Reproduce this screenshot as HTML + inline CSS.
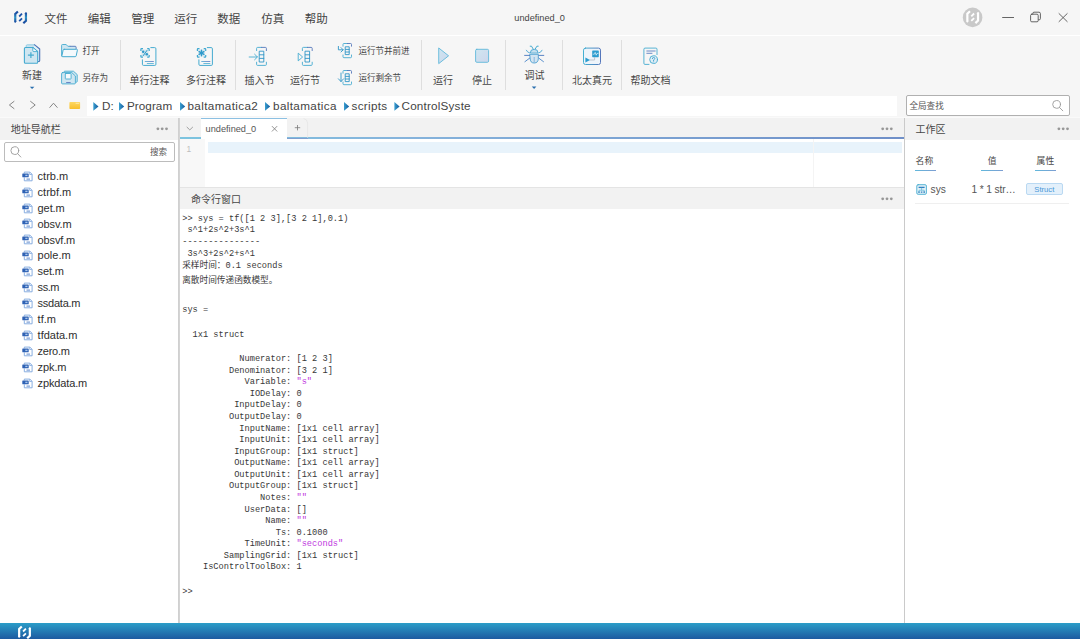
<!DOCTYPE html>
<html lang="zh-CN">
<head>
<meta charset="utf-8">
<title>undefined_0</title>
<style>
*{box-sizing:border-box;margin:0;padding:0}
html,body{width:1080px;height:639px;overflow:hidden;background:#f6f6f6}
body{position:relative;font-family:"Liberation Sans","Noto Sans CJK SC",sans-serif;color:#333;font-size:10px}
.a{position:absolute;white-space:nowrap;line-height:1}
.menu{font-size:11.5px;color:#444;top:14px}
.tl{font-size:10px;color:#464646}
.ts{font-size:8.55px;color:#464646}
.sep{position:absolute;width:1px;background:#dedede;top:40px;height:50px}
.mono{font-family:"Liberation Mono","Noto Sans CJK SC",monospace}
.cl{position:absolute;left:182.2px;white-space:pre;font-family:"Liberation Mono","Noto Sans CJK SC",monospace;font-size:8.67px;line-height:12px;height:12px;color:#383838}
.str{color:#c038e0}
.bc{top:100px;font-size:11.7px;color:#444}
.fi{left:37.6px;font-size:11px;line-height:16px;color:#2e2e2e}
svg{position:absolute;overflow:visible}
</style>
</head>
<body>
<!-- TITLE BAR -->
<div class="a" id="titlebar" style="left:0;top:0;width:1080px;height:35px;background:#f6f6f6"></div>
<div class="a" style="left:0;top:35px;width:1080px;height:1px;background:#fff"></div>
<div class="a menu" style="left:44.4px">文件</div>
<div class="a menu" style="left:87.7px">编辑</div>
<div class="a menu" style="left:131.3px">管理</div>
<div class="a menu" style="left:174.3px">运行</div>
<div class="a menu" style="left:217.3px">数据</div>
<div class="a menu" style="left:261.3px">仿真</div>
<div class="a menu" style="left:304.8px">帮助</div>
<div class="a" style="left:514.3px;top:13.5px;font-size:9.2px;color:#444">undefined_0</div>

<!-- TOOLBAR -->
<div class="a tl" style="left:22px;top:70.7px">新建</div>
<div class="a ts" style="left:82.5px;top:47.1px">打开</div>
<div class="a ts" style="left:82.5px;top:73.8px">另存为</div>
<div class="sep" style="left:120px"></div>
<div class="a tl" style="left:129.5px;top:76px">单行注释</div>
<div class="a tl" style="left:186px;top:76px">多行注释</div>
<div class="sep" style="left:235px"></div>
<div class="a tl" style="left:244.5px;top:76px">插入节</div>
<div class="a tl" style="left:290px;top:76px">运行节</div>
<div class="a ts" style="left:358.4px;top:47.1px">运行节并前进</div>
<div class="a ts" style="left:358.4px;top:73.8px">运行剩余节</div>
<div class="sep" style="left:421px"></div>
<div class="a tl" style="left:433px;top:76px">运行</div>
<div class="a tl" style="left:472px;top:76px">停止</div>
<div class="sep" style="left:505px"></div>
<div class="a tl" style="left:524.4px;top:71px">调试</div>
<div class="sep" style="left:562px"></div>
<div class="a tl" style="left:572px;top:76px">北太真元</div>
<div class="sep" style="left:621px"></div>
<div class="a tl" style="left:630.5px;top:76px">帮助文档</div>

<!-- ADDRESS BAR -->
<div class="a" style="left:87px;top:95.5px;width:810.2px;height:20.2px;background:#fff"></div>
<div class="a" style="left:0;top:117px;width:1080px;height:1px;background:#fafafa"></div>
<div class="a" style="left:906px;top:95px;width:164px;height:21px;background:#fff;border:1px solid #b0b0b0;border-radius:2px"></div>
<div class="a ts" style="left:909.5px;top:101.5px;color:#555">全局查找</div>

<div class="a bc" style="left:102.0px">D:</div>
<div class="a bc" style="left:127.0px;letter-spacing:0.05px">Program</div>
<div class="a bc" style="left:187.5px;letter-spacing:0.37px">baltamatica2</div>
<div class="a bc" style="left:273.0px;letter-spacing:0.38px">baltamatica</div>
<div class="a bc" style="left:351.5px;letter-spacing:0.30px">scripts</div>
<div class="a bc" style="left:401.5px;letter-spacing:0.20px">ControlSyste</div>

<!-- LEFT PANEL -->
<div class="a" style="left:0;top:118px;width:178.4px;height:21.8px;background:#f2f2f2"></div>
<div class="a" style="left:0;top:140px;width:178px;height:483px;background:#fff"></div>
<div class="a" style="left:178.3px;top:118px;width:1.6px;height:505px;background:linear-gradient(90deg,#d4d4d4,#cccccc 50%,#dcdcdc)"></div>
<div class="a tl" style="left:10.7px;top:124.6px">地址导航栏</div>
<div class="a" style="left:4px;top:142px;width:171px;height:20px;background:#fff;border:1px solid #bcbcbc;border-radius:2px"></div>
<div class="a ts" style="left:150px;top:147.5px;color:#555">搜索</div>

<div class="a fi" style="top:167.70px">ctrb.m</div>
<svg width="11" height="11" style="left:22.3px;top:170.60px"><use href="#mfile" width="11" height="11"/></svg>
<div class="a fi" style="top:183.65px">ctrbf.m</div>
<svg width="11" height="11" style="left:22.3px;top:186.55px"><use href="#mfile" width="11" height="11"/></svg>
<div class="a fi" style="top:199.60px;letter-spacing:-0.10px">get.m</div>
<svg width="11" height="11" style="left:22.3px;top:202.50px"><use href="#mfile" width="11" height="11"/></svg>
<div class="a fi" style="top:215.55px;letter-spacing:-0.12px">obsv.m</div>
<svg width="11" height="11" style="left:22.3px;top:218.45px"><use href="#mfile" width="11" height="11"/></svg>
<div class="a fi" style="top:231.50px;letter-spacing:-0.14px">obsvf.m</div>
<svg width="11" height="11" style="left:22.3px;top:234.40px"><use href="#mfile" width="11" height="11"/></svg>
<div class="a fi" style="top:247.45px">pole.m</div>
<svg width="11" height="11" style="left:22.3px;top:250.35px"><use href="#mfile" width="11" height="11"/></svg>
<div class="a fi" style="top:263.40px;letter-spacing:-0.15px">set.m</div>
<svg width="11" height="11" style="left:22.3px;top:266.30px"><use href="#mfile" width="11" height="11"/></svg>
<div class="a fi" style="top:279.35px;letter-spacing:-0.44px">ss.m</div>
<svg width="11" height="11" style="left:22.3px;top:282.25px"><use href="#mfile" width="11" height="11"/></svg>
<div class="a fi" style="top:295.30px;letter-spacing:-0.25px">ssdata.m</div>
<svg width="11" height="11" style="left:22.3px;top:298.20px"><use href="#mfile" width="11" height="11"/></svg>
<div class="a fi" style="top:311.25px">tf.m</div>
<svg width="11" height="11" style="left:22.3px;top:314.15px"><use href="#mfile" width="11" height="11"/></svg>
<div class="a fi" style="top:327.20px">tfdata.m</div>
<svg width="11" height="11" style="left:22.3px;top:330.10px"><use href="#mfile" width="11" height="11"/></svg>
<div class="a fi" style="top:343.15px;letter-spacing:-0.25px">zero.m</div>
<svg width="11" height="11" style="left:22.3px;top:346.05px"><use href="#mfile" width="11" height="11"/></svg>
<div class="a fi" style="top:359.10px;letter-spacing:-0.10px">zpk.m</div>
<svg width="11" height="11" style="left:22.3px;top:362.00px"><use href="#mfile" width="11" height="11"/></svg>
<div class="a fi" style="top:375.05px;letter-spacing:-0.14px">zpkdata.m</div>
<svg width="11" height="11" style="left:22.3px;top:377.95px"><use href="#mfile" width="11" height="11"/></svg>

<!-- CENTER -->
<div class="a" style="left:180px;top:118px;width:724px;height:21px;background:#f2f2f2"></div>
<div class="a" style="left:180px;top:139px;width:724px;height:48px;background:#fff"></div>
<div class="a" style="left:180px;top:187px;width:724.5px;height:22.3px;background:#f2f2f2;border-top:1px solid #e4e4e4"></div>
<div class="a" style="left:180px;top:209.3px;width:724.5px;height:413.7px;background:#fff"></div>
<div class="a" style="left:179.7px;top:137.2px;width:724.5px;height:1.5px;background:linear-gradient(90deg,#7cc4df,#86b4dc 30%,#6f8fc8)"></div>
<div class="a" style="left:201px;top:118px;width:85.5px;height:21px;background:#fff;border-top:1px solid #8cc0e2"></div>
<div class="a" style="left:286.5px;top:137.5px;width:21.5px;height:1.5px;background:#7f9fd0"></div>
<div class="a" style="left:205.6px;top:125px;font-size:9.2px;color:#555">undefined_0</div>
<div class="a" style="left:180px;top:139px;width:25px;height:48px;background:#f8f8f8"></div>
<div class="a" style="left:208px;top:141.9px;width:694.4px;height:11.6px;background:#e8f3fb"></div>
<div class="a" style="left:813.2px;top:139px;width:1px;height:48px;background:#f4f4f4"></div>
<div class="a" style="left:186.6px;top:144.7px;font-size:8.4px;color:#bdbdbd">1</div>
<div class="a tl" style="left:191px;top:194.7px">命令行窗口</div>

<!-- CONSOLE -->
<div id="console">
<div class="cl" style="top:212.5px">&gt;&gt; sys = tf([1 2 3],[3 2 1],0.1)</div>
<div class="cl" style="top:224.2px"> s^1+2s^2+3s^1</div>
<div class="cl" style="top:236.3px">---------------</div>
<div class="cl" style="top:248.0px"> 3s^3+2s^2+s^1</div>
<div class="cl" style="top:259.7px">采样时间：0.1 seconds</div>
<div class="cl" style="top:275.2px">离散时间传递函数模型。</div>
<div class="cl" style="top:304.2px">sys =</div>
<div class="cl" style="top:328.6px">  1x1 struct</div>
<div class="cl" style="top:353.2px">           Numerator: [1 2 3]</div>
<div class="cl" style="top:364.8px">         Denominator: [3 2 1]</div>
<div class="cl" style="top:376.3px">            Variable: <span class="str">&quot;s&quot;</span></div>
<div class="cl" style="top:387.9px">             IODelay: 0</div>
<div class="cl" style="top:399.4px">          InputDelay: 0</div>
<div class="cl" style="top:411.0px">         OutputDelay: 0</div>
<div class="cl" style="top:422.6px">           InputName: [1x1 cell array]</div>
<div class="cl" style="top:434.1px">           InputUnit: [1x1 cell array]</div>
<div class="cl" style="top:445.7px">          InputGroup: [1x1 struct]</div>
<div class="cl" style="top:457.3px">          OutputName: [1x1 cell array]</div>
<div class="cl" style="top:468.8px">          OutputUnit: [1x1 cell array]</div>
<div class="cl" style="top:480.4px">         OutputGroup: [1x1 struct]</div>
<div class="cl" style="top:491.9px">               Notes: <span class="str">&quot;&quot;</span></div>
<div class="cl" style="top:503.5px">            UserData: []</div>
<div class="cl" style="top:515.1px">                Name: <span class="str">&quot;&quot;</span></div>
<div class="cl" style="top:526.6px">                  Ts: 0.1000</div>
<div class="cl" style="top:538.2px">            TimeUnit: <span class="str">&quot;seconds&quot;</span></div>
<div class="cl" style="top:549.7px">        SamplingGrid: [1x1 struct]</div>
<div class="cl" style="top:561.3px">    IsControlToolBox: 1</div>
<div class="cl" style="top:586.3px">&gt;&gt;</div>
</div>

<!-- RIGHT PANEL -->
<div class="a" style="left:904px;top:118px;width:1.3px;height:505px;background:#cacaca"></div>
<div class="a" style="left:905.3px;top:118px;width:175px;height:22px;background:#f2f2f2"></div>
<div class="a" style="left:905.3px;top:140px;width:175px;height:483px;background:#fff"></div>
<div class="a tl" style="left:915.5px;top:124.9px">工作区</div>

<div class="a" style="left:915.6px;top:157.3px;font-size:8.8px;color:#4a4a4a">名称</div>
<div class="a" style="left:987.8px;top:157.3px;font-size:8.8px;color:#4a4a4a">值</div>
<div class="a" style="left:1036.6px;top:157.3px;font-size:8.8px;color:#4a4a4a">属性</div>
<div class="a" style="left:914.7px;top:170px;width:21.5px;height:1px;background:linear-gradient(90deg,#62b8dc,#7d9ed2)"></div>
<div class="a" style="left:981.2px;top:170px;width:21.5px;height:1px;background:linear-gradient(90deg,#62b8dc,#7d9ed2)"></div>
<div class="a" style="left:1034.7px;top:170px;width:21.5px;height:1px;background:linear-gradient(90deg,#62b8dc,#7d9ed2)"></div>
<div class="a" style="left:930.6px;top:184.6px;font-size:10.2px;color:#555">sys</div>
<div class="a" style="left:971.4px;top:184.6px;font-size:10.2px;color:#555;letter-spacing:-0.1px">1 * 1 str…</div>
<div class="a" style="left:1025.8px;top:183.3px;width:37px;height:12.2px;background:#e3f0fb;border:1px solid #bad9f2;border-radius:2px;font-size:7.7px;line-height:11.6px;text-align:center;color:#4a98d8">Struct</div>
<div class="a" style="left:914.7px;top:203px;width:154px;height:1px;background:#efefef"></div>

<!-- STATUS BAR -->
<div class="a" style="left:0;top:623px;width:1080px;height:16px;background:linear-gradient(#2b9dc8,#1d5aa0)"></div>

<!-- ICONS -->
<svg id="icons" width="1080" height="639" viewBox="0 0 1080 639" style="left:0;top:0;pointer-events:none" fill="none" stroke-linecap="round" stroke-linejoin="round">
<defs>
<linearGradient id="gb" x1="0" y1="0" x2="1" y2="0"><stop offset="0" stop-color="#45b0d2"/><stop offset="1" stop-color="#5577bb"/></linearGradient>
<linearGradient id="gs" x1="0" y1="0" x2="1" y2="1"><stop offset="0" stop-color="#cfe6f1"/><stop offset="1" stop-color="#cdd6ec"/></linearGradient>
<linearGradient id="ga" x1="0" y1="0" x2="1" y2="0"><stop offset="0" stop-color="#3aa0d0"/><stop offset="1" stop-color="#13589c"/></linearGradient>
<linearGradient id="gl" gradientUnits="userSpaceOnUse" x1="0" y1="11" x2="0" y2="24"><stop offset="0" stop-color="#1a4a9e"/><stop offset="0.2" stop-color="#1d55a6"/><stop offset="0.5" stop-color="#2f93c4"/><stop offset="0.8" stop-color="#1d55a6"/><stop offset="1" stop-color="#1a4a9e"/></linearGradient>
<linearGradient id="gf" x1="0" y1="0" x2="0" y2="1"><stop offset="0" stop-color="#fdd862"/><stop offset="1" stop-color="#f8be2a"/></linearGradient>
<linearGradient id="gln" gradientUnits="userSpaceOnUse" x1="144" y1="0" x2="154" y2="0"><stop offset="0" stop-color="#5ab5d8"/><stop offset="1" stop-color="#6b7cc4"/></linearGradient>
<symbol id="mfile" viewBox="0 0 11 11" overflow="visible">
<path d="M2.3 2.4V1.1H7.9L10.1 3.3V9.8H2.3V6.4" stroke="#7da6de" stroke-width="0.9" fill="#fff"/>
<path d="M7.7 1.3V3.5H9.9" stroke="#7da6de" stroke-width="0.8" fill="none"/>
<rect x="0.3" y="2.6" width="6.4" height="3.6" rx="0.5" fill="#2f62b4" stroke="none"/>
<rect x="3.3" y="3.7" width="2.2" height="1.4" fill="#a9c6ec" stroke="none"/>
<path d="M4.5 8.1H8" stroke="#4d7cc6" stroke-width="0.9" fill="none"/>
</symbol>
<symbol id="tri" viewBox="0 0 6 9" overflow="visible"><path d="M0 0L5.2 4.4L0 8.8Z" fill="url(#ga)" stroke="none"/></symbol>
</defs>

<!-- app logo -->
<g id="logo" fill="none" stroke-linecap="butt" stroke-linejoin="miter">
<path d="M17.9 11.5L15.25 14V21.4L16 22.1" stroke="url(#gl)" stroke-width="2.2"/>
<path d="M23.3 23.3L25.95 20.8V13.4L25.2 12.7" stroke="url(#gl)" stroke-width="2.2"/>
<path d="M19.2 16.5L22 13.7M19.2 21.1L22 18.3" stroke="#1f55a8" stroke-width="1.8"/>
</g>

<!-- new -->
<path d="M26.2 47.6V45.8Q26.2 44.8 27.2 44.8H34.7L39.7 49V60.5Q39.7 61.5 38.7 61.5H37.6V51.6L32.8 47.6Z" fill="#e6f2f8" stroke="none"/>
<path d="M26.2 47.5V45.8Q26.2 44.8 27.2 44.8H34.7L33.4 47.5Z" fill="#c9e3ef" stroke="none"/>
<path d="M26.2 47.2V45.8Q26.2 44.8 27.2 44.8H34.4" stroke="#8fcbe2" stroke-width="0.9"/>
<path d="M34.4 44.8H34.7L39.7 49V60.5Q39.7 61.5 38.7 61.5H38" stroke="#4f74b8" stroke-width="1.1"/>
<path d="M25.4 47.5H32.8L37.7 51.6V62.3Q37.7 63.3 36.7 63.3H25.4Q24.4 63.3 24.4 62.3V48.5Q24.4 47.5 25.4 47.5Z" fill="#cfe6f1" stroke="#45abd0" stroke-width="1.1"/>
<path d="M32.8 47.7V50.6Q32.8 51.6 33.8 51.6H37.5Z" fill="#f4fafc" stroke="#45abd0" stroke-width="0.9"/>
<path d="M27.9 55.2H33.9M30.9 52.3V58.1" stroke="#45abd0" stroke-width="1.2" stroke-linecap="butt"/>
<path d="M29.8 86.8H34.4L32.1 89.1Z" fill="#2a6fae" stroke="none"/>

<!-- open -->
<path d="M61.6 55.6V45.4Q61.6 44.5 62.5 44.5H66.2L67.8 46.3H75.2Q76.1 46.3 76.1 47.2V48.4" fill="#cfe6f1" stroke="none"/>
<path d="M61.6 56V45.4Q61.6 44.5 62.5 44.5H66.2L67.8 46.3H70" stroke="#45abd0" stroke-width="0.9"/>
<path d="M70 46.3H75.2Q76.1 46.3 76.1 47.2V48.6" stroke="#4f74b8" stroke-width="0.9"/>
<path d="M64.2 49.3H76.6Q77.6 49.3 77.4 50.2L76.2 55.8Q76 56.7 75.1 56.7H62.8Q61.7 56.7 61.9 55.8L63.1 50.2Q63.3 49.3 64.2 49.3Z" fill="#f4f9fc" stroke="#45abd0" stroke-width="1"/>

<!-- save as -->
<path d="M64 72.4V72Q64 71.2 64.8 71.2H73.4L77.2 74.6V81.4Q77.2 82.2 76.4 82.2H76" fill="#cfe6f1" stroke="#45abd0" stroke-width="0.9"/>
<path d="M62.5 72.6H71.8L75.4 76V83Q75.4 83.9 74.5 83.9H62.5Q61.6 83.9 61.6 83V73.5Q61.6 72.6 62.5 72.6Z" fill="#cfe6f1" stroke="#45abd0" stroke-width="0.9"/>
<rect x="65.3" y="73.5" width="5.8" height="5.5" rx="0.5" fill="#f6fafc" stroke="#45abd0" stroke-width="0.9"/>
<path d="M66.2 82.5H70.7" stroke="#5f78c0" stroke-width="0.9" stroke-linecap="butt"/>

<!-- single-line comment -->
<g id="cmt1">
<path d="M150.8 47.6H154.7Q155.9 47.6 155.9 48.8V64.3Q155.9 65.4 154.8 65.4H143.5Q142.4 65.4 142.4 64.3V59.8" stroke="#45abd0" stroke-width="1"/>
<path d="M144.8 61.5H153.8" stroke="url(#gln)" stroke-width="0.9" stroke-linecap="butt"/><path d="M146.9 63.5H153.8" stroke="#5ab5d8" stroke-width="0.9" stroke-linecap="butt"/>
<rect x="141.6" y="49.4" width="6.9" height="7.1" rx="1" fill="#45abd0" opacity="0.2" stroke="none"/>
<path d="M140.9 51V49.3Q140.9 48.7 141.5 48.7H143M147.2 48.7H148.6Q149.2 48.7 149.2 49.3V51M149.2 55V56.6Q149.2 57.2 148.6 57.2H147.2M143 57.2H141.5Q140.9 57.2 140.9 56.6V55" stroke="#3fa8d0" stroke-width="1.2" stroke-linecap="butt"/>
<path d="M146.9 50.5L143.3 55.6" stroke="#2f9acb" stroke-width="1"/>
<circle cx="143.2" cy="51.8" r="1.25" fill="#2f9acb" stroke="none"/>
<circle cx="146.8" cy="54.2" r="1.25" fill="#2f9acb" stroke="none"/>
</g>
<!-- multi-line comment -->
<g id="cmt2" transform="translate(56.5 0)">
<path d="M150.8 47.6H154.7Q155.9 47.6 155.9 48.8V64.3Q155.9 65.4 154.8 65.4H143.5Q142.4 65.4 142.4 64.3V59.8" stroke="#45abd0" stroke-width="1"/>
<path d="M144.8 61.5H153.8" stroke="url(#gln)" stroke-width="0.9" stroke-linecap="butt"/><path d="M146.9 63.5H153.8" stroke="#5ab5d8" stroke-width="0.9" stroke-linecap="butt"/>
<rect x="141.6" y="49.4" width="6.9" height="7.1" rx="1" fill="#45abd0" opacity="0.2" stroke="none"/>
<path d="M140.9 51V49.3Q140.9 48.7 141.5 48.7H143M147.2 48.7H148.6Q149.2 48.7 149.2 49.3V51M149.2 55V56.6Q149.2 57.2 148.6 57.2H147.2M143 57.2H141.5Q140.9 57.2 140.9 56.6V55" stroke="#3fa8d0" stroke-width="1.2" stroke-linecap="butt"/>
<path d="M145 50.2V55.8M142.6 51.6L147.4 54.4M147.4 51.6L142.6 54.4" stroke="#2f9acb" stroke-width="1.3"/>
</g>

<!-- insert section -->
<g id="sec">
<path d="M256.6 50.6V48.4Q256.6 47.4 257.6 47.4H261.6" stroke="#45abd0" stroke-width="0.9"/>
<path d="M261.6 47.4H265.4Q266.4 47.4 266.4 48.4V50.6" stroke="#5577bb" stroke-width="0.9"/>
<path d="M256.6 62.2V64.4Q256.6 65.4 257.6 65.4H265.4Q266.4 65.4 266.4 64.4V62.2" stroke="#45abd0" stroke-width="0.9"/>
<path d="M259.6 51.2H263.8V62H259.6ZM259.6 54.8H263.8M259.6 58.4H263.8" stroke="#2f95c6" stroke-width="0.9"/>
</g>
<path d="M249.2 57H257.2M254.6 54.2L257.4 57L254.6 59.8" stroke="#45abd0" stroke-width="0.9"/>
<!-- run section -->
<g transform="translate(45.8 0)">
<path d="M256.6 50.6V48.4Q256.6 47.4 257.6 47.4H261.6" stroke="#45abd0" stroke-width="0.9"/>
<path d="M261.6 47.4H265.4Q266.4 47.4 266.4 48.4V50.6" stroke="#5577bb" stroke-width="0.9"/>
<path d="M256.6 62.2V64.4Q256.6 65.4 257.6 65.4H265.4Q266.4 65.4 266.4 64.4V62.2" stroke="#45abd0" stroke-width="0.9"/>
<path d="M259.6 51.2H263.8V62H259.6ZM259.6 54.8H263.8M259.6 58.4H263.8" stroke="#2f95c6" stroke-width="0.9"/>
</g>
<path d="M298.5 53.4L302.6 57L298.5 60.6Z" stroke="#45abd0" stroke-width="0.9"/>

<!-- run and advance -->
<g id="sec2">
<path d="M343 46.2V44.4Q343 43.5 343.9 43.5H347.4" stroke="#45abd0" stroke-width="0.9"/>
<path d="M347.4 43.5H350.6Q351.5 43.5 351.5 44.4V46.2" stroke="#5577bb" stroke-width="0.9"/>
<path d="M343 55V56.8Q343 57.7 343.9 57.7H350.6Q351.5 57.7 351.5 56.8V55" stroke="#45abd0" stroke-width="0.9"/>
<path d="M345.6 46.8H349.2V54.6H345.6ZM345.6 49.4H349.2M345.6 52H349.2" stroke="#2f95c6" stroke-width="0.9"/>
</g>
<path d="M338.4 46.4V49.8H343M341 47.6L343.2 49.8L341 52" stroke="#2f95c6" stroke-width="0.9"/>
<!-- run remaining -->
<g transform="translate(0 27)">
<path d="M343 46.2V44.4Q343 43.5 343.9 43.5H347.4" stroke="#45abd0" stroke-width="0.9"/>
<path d="M347.4 43.5H350.6Q351.5 43.5 351.5 44.4V46.2" stroke="#5577bb" stroke-width="0.9"/>
<path d="M343 55V56.8Q343 57.7 343.9 57.7H350.6Q351.5 57.7 351.5 56.8V55" stroke="#45abd0" stroke-width="0.9"/>
<path d="M345.6 46.8H349.2V54.6H345.6ZM345.6 49.4H349.2M345.6 52H349.2" stroke="#2f95c6" stroke-width="0.9"/>
</g>
<path d="M341 73V81.4M338.4 78.8L341 81.6L343.6 78.8" stroke="#2f95c6" stroke-width="0.9"/>

<!-- run -->
<path d="M439 48.2L448.6 55.8L439 63.4Z" fill="url(#gs)" stroke="#5fb8da" stroke-width="0.9"/>
<!-- stop -->
<rect x="475.6" y="49.3" width="13" height="13" rx="1.2" fill="url(#gs)" stroke="#5fb8da" stroke-width="0.9"/>

<!-- debug bug -->
<g id="bug">
<path d="M530.2 46.2H531.5L533 48.7M538.2 46.2H536.9L535.4 48.7" stroke="#45abd0" stroke-width="1"/>
<path d="M530.3 52.6Q530.3 49.3 534.2 49.3Q538.1 49.3 538.1 52.6Z" fill="#c4dfee" stroke="#4aa6d2" stroke-width="0.9"/>
<path d="M530.1 54.3H538.3V58.4Q538.3 63 534.2 63Q530.1 63 530.1 58.4Z" fill="#d2e4f1" stroke="#4b9fd0" stroke-width="0.9"/>
<path d="M534.2 57V62.6" stroke="#86b6de" stroke-width="1" stroke-linecap="butt"/>
<path d="M529.6 52.9L527.6 51.9L526.4 50.2M538.8 52.9L540.8 51.9L542 50.2" stroke="#4aa6d2" stroke-width="0.9"/>
<path d="M524.6 55.4H529.6M538.8 55.4H543.8" stroke="#4a78c0" stroke-width="0.9"/>
<path d="M529.7 58.1L524.9 61.7M538.7 58.1L543.5 61.7" stroke="#4a86c8" stroke-width="0.9"/>
</g>
<path d="M531.8 86.6H536.4L534.1 88.9Z" fill="#2a6fae" stroke="none"/>

<!-- beitai zhenyuan -->
<rect x="583.5" y="48.1" width="17" height="16.4" rx="2" fill="#eef4fa" stroke="url(#gb)" stroke-width="1"/>
<rect x="592.2" y="50.4" width="6.6" height="6.8" rx="0.6" fill="#2b9ccf" stroke="none"/>
<path d="M593.2 54.2H594.4L595.2 52.4L596.2 55.2L597 53.4H598" stroke="#fff" stroke-width="0.6"/>
<path d="M590 60H594.6V57.4" stroke="#b8bec8" stroke-width="0.9"/>
<path d="M585.4 57.4L590 60L585.4 62.6Z" fill="#2b9ccf" stroke="none"/>

<!-- help doc -->
<path d="M649 64.4H645Q643.9 64.4 643.9 63.3V49.2Q643.9 48.1 645 48.1H655.9Q657 48.1 657 49.2V54.6" stroke="#45abd0" stroke-width="0.9"/>
<path d="M646.8 51H655.2M646.8 53.3H652" stroke="#5b7fc2" stroke-width="0.9"/>
<circle cx="653.6" cy="59.6" r="3.9" fill="#dfeef6" stroke="#45abd0" stroke-width="0.9"/>
<path d="M652.4 58.6Q652.4 57.4 653.6 57.4Q654.8 57.4 654.8 58.5Q654.8 59.3 653.6 59.9V60.6M653.6 61.8V61.9" stroke="#2f95c6" stroke-width="0.8"/>

<!-- nav arrows -->
<path d="M14 101.4L9.4 105L14 108.6" stroke="#868686" stroke-width="1"/>
<path d="M30.6 101.4L35.2 105L30.6 108.6" stroke="#868686" stroke-width="1"/>
<path d="M49.8 107.4L53.5 103.2L57.2 107.4" stroke="#868686" stroke-width="1"/>
<!-- folder -->
<rect x="69.4" y="102" width="10.7" height="7.1" rx="0.8" fill="url(#gf)" stroke="none"/>
<path d="M75.6 103.3H79.3" stroke="#fff4c8" stroke-width="0.7" stroke-linecap="butt"/>

<!-- breadcrumb triangles -->
<use href="#tri" x="93.3" y="102" width="6" height="9"/>
<use href="#tri" x="119" y="102" width="6" height="9"/>
<use href="#tri" x="180" y="102" width="6" height="9"/>
<use href="#tri" x="265" y="102" width="6" height="9"/>
<use href="#tri" x="344" y="102" width="6" height="9"/>
<use href="#tri" x="394.4" y="102" width="6" height="9"/>

<!-- global search magnifier -->
<circle cx="1056.6" cy="104.4" r="3.9" stroke="#9a9a9a" stroke-width="0.9"/>
<path d="M1059.4 107.4L1062.8 110.8" stroke="#9a9a9a" stroke-width="0.9"/>
<!-- nav search magnifier -->
<circle cx="14.8" cy="150.6" r="3.9" stroke="#9a9a9a" stroke-width="0.9"/>
<path d="M17.6 153.6L20.8 157" stroke="#9a9a9a" stroke-width="0.9"/>

<!-- window controls -->
<circle cx="972.6" cy="17.4" r="9.8" fill="#c9c9c9" stroke="none"/>
<g stroke="none" fill="#fff" transform="translate(952.1 -0.2)">
<path d="M17.9 11.5L15.25 14V21.4L16 22.1M23.3 23.3L25.95 20.8V13.4L25.2 12.7" stroke="#fff" stroke-width="2.2" fill="none" stroke-linecap="butt" stroke-linejoin="miter"/>
<path d="M19.2 16.5L22 13.7M19.2 21.1L22 18.3" stroke="#fff" stroke-width="1.8" fill="none" stroke-linecap="butt"/>
</g>
<path d="M1002.6 17.5H1013.6" stroke="#555" stroke-width="0.9"/>
<rect x="1030.6" y="14.2" width="7.6" height="7.6" rx="1.2" stroke="#555" stroke-width="0.9"/>
<path d="M1032.8 14V13.4Q1032.8 12.2 1034 12.2H1039Q1040.4 12.2 1040.4 13.6V18.6Q1040.4 19.8 1039.2 19.8H1038.6" stroke="#555" stroke-width="0.9"/>
<path d="M1059 13.6L1067.2 21.6M1067.2 13.6L1059 21.6" stroke="#555" stroke-width="0.9"/>

<!-- ellipsis menus -->
<circle cx="157.9" cy="128.8" r="1.4" fill="#979797" stroke="none"/><circle cx="162.2" cy="128.8" r="1.4" fill="#979797" stroke="none"/><circle cx="166.5" cy="128.8" r="1.4" fill="#979797" stroke="none"/>
<circle cx="882.7" cy="128.8" r="1.4" fill="#979797" stroke="none"/><circle cx="887.0" cy="128.8" r="1.4" fill="#979797" stroke="none"/><circle cx="891.3" cy="128.8" r="1.4" fill="#979797" stroke="none"/>
<circle cx="882.7" cy="198.8" r="1.4" fill="#979797" stroke="none"/><circle cx="887.0" cy="198.8" r="1.4" fill="#979797" stroke="none"/><circle cx="891.3" cy="198.8" r="1.4" fill="#979797" stroke="none"/>
<circle cx="1058.9" cy="128.8" r="1.4" fill="#979797" stroke="none"/><circle cx="1063.2" cy="128.8" r="1.4" fill="#979797" stroke="none"/><circle cx="1067.5" cy="128.8" r="1.4" fill="#979797" stroke="none"/>
<!-- tab controls -->
<path d="M187 127.2L189.8 129.9L192.6 127.2" stroke="#8a8a8a" stroke-width="0.8"/>
<path d="M272.2 126.4L276.9 131.2M276.9 126.4L272.2 131.2" stroke="#7a7a7a" stroke-width="0.8"/>
<path d="M295.2 127.7H299.8M297.5 125.4V130" stroke="#7a7a7a" stroke-width="0.8"/>
<path d="M304 118.6Q307.4 119.4 307.6 123V137.4" stroke="#e4e4e4" stroke-width="0.8"/>

<!-- sys struct icon -->
<rect x="916.8" y="184.7" width="9.6" height="9.6" rx="1.3" fill="#e4f2f8" stroke="#45abd0" stroke-width="0.9"/>
<path d="M918.6 187.4H924.6" stroke="#2f7fc0" stroke-width="1.3" stroke-linecap="butt"/>
<path d="M921.6 188V190M919 192V190.2H924.2V192" stroke="#45abd0" stroke-width="0.6"/>
<path d="M918.2 192.2H919.8M920.8 192.2H922.4M923.4 192.2H925" stroke="#2f7fc0" stroke-width="1.3" stroke-linecap="butt"/>

<!-- status logo -->
<g stroke="none" fill="#fff" transform="translate(3.9 615)">
<path d="M17.9 11.5L15.25 14V21.4L16 22.1M23.3 23.3L25.95 20.8V13.4L25.2 12.7" stroke="#fff" stroke-width="2.2" fill="none" stroke-linecap="butt" stroke-linejoin="miter"/>
<path d="M19.2 16.5L22 13.7M19.2 21.1L22 18.3" stroke="#fff" stroke-width="1.8" fill="none" stroke-linecap="butt"/>
</g>
</svg>
</body>
</html>
